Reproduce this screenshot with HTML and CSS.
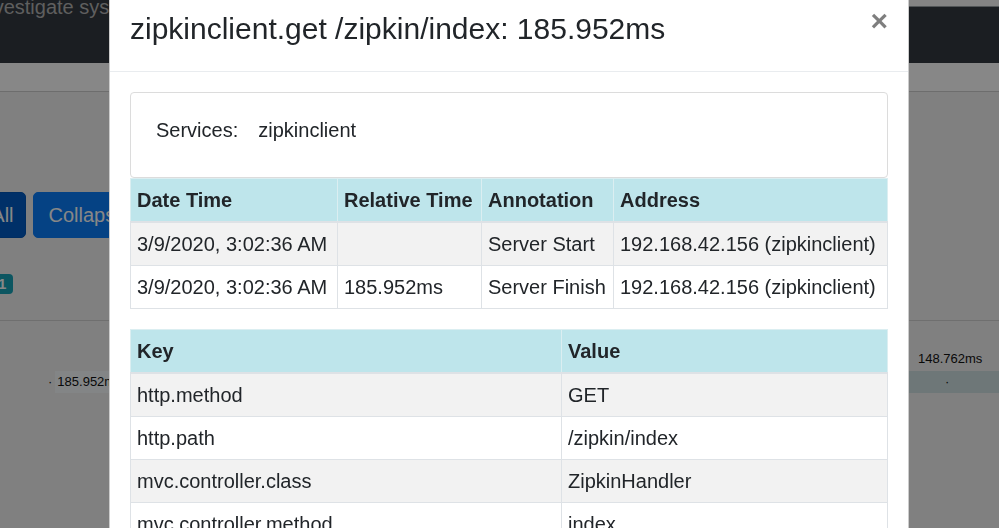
FILE: index.html
```html
<!DOCTYPE html>
<html>
<head>
<meta charset="utf-8">
<link rel="stylesheet" href="styles.css">
</head>
<body>
<div class="page">
  <header class="topbar">
    <div class="brand">Investigate system behavior</div>
    <div class="topstrip"></div>
  </header>
  <div class="subbar"></div>
  <main class="main">
    <div class="btns">
      <button class="btn btn-dark-blue">Expand All</button>
      <button class="btn btn-blue">Collapse All</button>
    </div>
    <div class="badges"><span class="badge">1</span></div>
    <hr class="rule">
    <div class="timeline">
      <div class="span-left"><span class="dot">·</span><span class="span-label">185.952ms</span></div>
      <div class="span-right">
        <div class="right-label">148.762ms</div>
        <div class="right-bar">·</div>
      </div>
    </div>
  </main>
</div>

<div class="backdrop"></div>

<div class="modal">
  <div class="modal-content">
    <div class="modal-header">
      <h4 class="modal-title">zipkinclient.get /zipkin/index: 185.952ms</h4>
      <button class="close">×</button>
    </div>
    <div class="modal-body">
      <div class="services">
        <span class="svc-label">Services:</span>
        <span class="svc-name">zipkinclient</span>
      </div>
      <table class="tbl">
        <colgroup><col style="width:207px"><col style="width:144px"><col style="width:132px"><col style="width:274px"></colgroup>
        <thead>
          <tr><th>Date Time</th><th>Relative Time</th><th>Annotation</th><th>Address</th></tr>
        </thead>
        <tbody>
          <tr><td>3/9/2020, 3:02:36 AM</td><td></td><td>Server Start</td><td>192.168.42.156 (zipkinclient)</td></tr>
          <tr><td>3/9/2020, 3:02:36 AM</td><td>185.952ms</td><td>Server Finish</td><td>192.168.42.156 (zipkinclient)</td></tr>
        </tbody>
      </table>
      <table class="tbl">
        <colgroup><col style="width:431px"><col style="width:326px"></colgroup>
        <thead>
          <tr><th>Key</th><th>Value</th></tr>
        </thead>
        <tbody>
          <tr><td>http.method</td><td>GET</td></tr>
          <tr><td>http.path</td><td>/zipkin/index</td></tr>
          <tr><td>mvc.controller.class</td><td>ZipkinHandler</td></tr>
          <tr><td>mvc.controller.method</td><td>index</td></tr>
          <tr><td>span.kind</td><td>SERVER</td></tr>
        </tbody>
      </table>
    </div>
  </div>
</div>
</body>
</html>
```
FILE: styles.css
```css
html, body {
  margin: 0;
  padding: 0;
  overflow: hidden;
  height: 528px;
}
body {
  font-family: "Liberation Sans", Arial, sans-serif;
  font-size: 20px;
  line-height: 1.5;
  color: #212529;
  background: #f2f2f2;
}

/* ---------- background page ---------- */
.topbar {
  height: 63px;
  background: #343a40;
  display: flex;
  justify-content: space-between;
  align-items: flex-start;
}
.brand {
  margin-top: -8px;
  margin-left: -23px;
  font-size: 20px;
  line-height: 30px;
  color: #b3b3b3;
  white-space: nowrap;
}
.topstrip {
  width: 400px;
  height: 6px;
  background: #fafafa;
  border-bottom: 1px solid #9aa0a5;
}
.subbar {
  height: 28px;
  background: #ffffff;
  border-bottom: 1px solid #cfcfcf;
}
.main {
  background: #f2f2f2;
  height: 436px;
  padding-top: 100px;
  box-sizing: border-box;
}
.btns {
  display: flex;
  gap: 7px;
  margin-left: -97px;
}
.btn {
  font-family: inherit;
  font-size: 20px;
  line-height: 30px;
  padding: 7px 15px;
  border: 1px solid transparent;
  border-radius: 5px;
  color: #fff;
  white-space: nowrap;
}
.btn-dark-blue { background: #005cc4; border-color: #0056b8; padding-right: 11px; }
.btn-blue { background: #0a7dfa; border-color: #0a7dfa; }
.badges {
  margin-top: 36px;
  margin-left: -9px;
  height: 20px;
}
.badge {
  display: inline-block;
  vertical-align: top;
  background: #17a2b8;
  color: #fff;
  font-size: 15px;
  font-weight: bold;
  line-height: 20px;
  padding: 0 7px;
  border-radius: 4px;
}
.rule {
  margin: 26px 0 0;
  border: 0;
  border-top: 1px solid #d2d2d2;
}
.timeline {
  display: flex;
  justify-content: space-between;
  align-items: flex-end;
  margin-top: 28px;
}
.span-left {
  margin-left: 48px;
  display: flex;
  align-items: center;
  font-size: 13px;
  line-height: 22px;
  color: #111;
}
.dot { margin-right: 3px; }
.span-label {
  background: #f7fbfd;
  padding: 0 60px 0 2px;
}
.span-right {
  width: 90px;
  font-size: 13px;
  color: #111;
}
.right-label {
  line-height: 20px;
  padding-left: 9px;
  margin-bottom: 2px;
}
.right-bar {
  height: 22px;
  line-height: 22px;
  background: #d0e1e3;
  padding-left: 36px;
}

/* ---------- overlay ---------- */
.backdrop {
  position: fixed;
  inset: 0;
  background: rgba(0, 0, 0, 0.47);
}
.modal {
  position: fixed;
  inset: 0;
  overflow: hidden;
}
.modal-content {
  width: 800px;
  box-sizing: border-box;
  margin: -15px 0 0 109px;
  background: #fff;
  border: 1px solid rgba(0, 0, 0, 0.2);
  border-radius: 6px;
}
.modal-header {
  display: flex;
  align-items: flex-start;
  padding: 20px;
  border-bottom: 1px solid #e9ecef;
}
.modal-title {
  margin: 0;
  font-size: 30px;
  font-weight: normal;
  line-height: 45px;
  color: #212529;
}
.close {
  margin: -20px -20px -20px auto;
  padding: 20px;
  background: none;
  border: 0;
  font-family: inherit;
  font-size: 30px;
  font-weight: bold;
  line-height: 1;
  color: #000;
  opacity: 0.5;
}
.modal-body {
  padding: 20px;
}
.services {
  border: 1px solid #dcdcdc;
  border-radius: 4px;
  padding: 22px 25px 32px;
  display: flex;
  gap: 20px;
}
.tbl {
  width: 757px;
  table-layout: fixed;
  border-collapse: collapse;
  margin-bottom: 20px;
}
.tbl th, .tbl td {
  padding: 6px;
  border: 1px solid #dee2e6;
  text-align: left;
  vertical-align: top;
  white-space: nowrap;
  line-height: 30px;
}
.tbl th {
  background: #bee5eb;
  font-weight: bold;
  vertical-align: bottom;
  border-color: #dbeef1;
  border-bottom: 2px solid #dee2e6;
}
.tbl tbody tr:nth-child(odd) td {
  background: #f2f2f2;
}
```
